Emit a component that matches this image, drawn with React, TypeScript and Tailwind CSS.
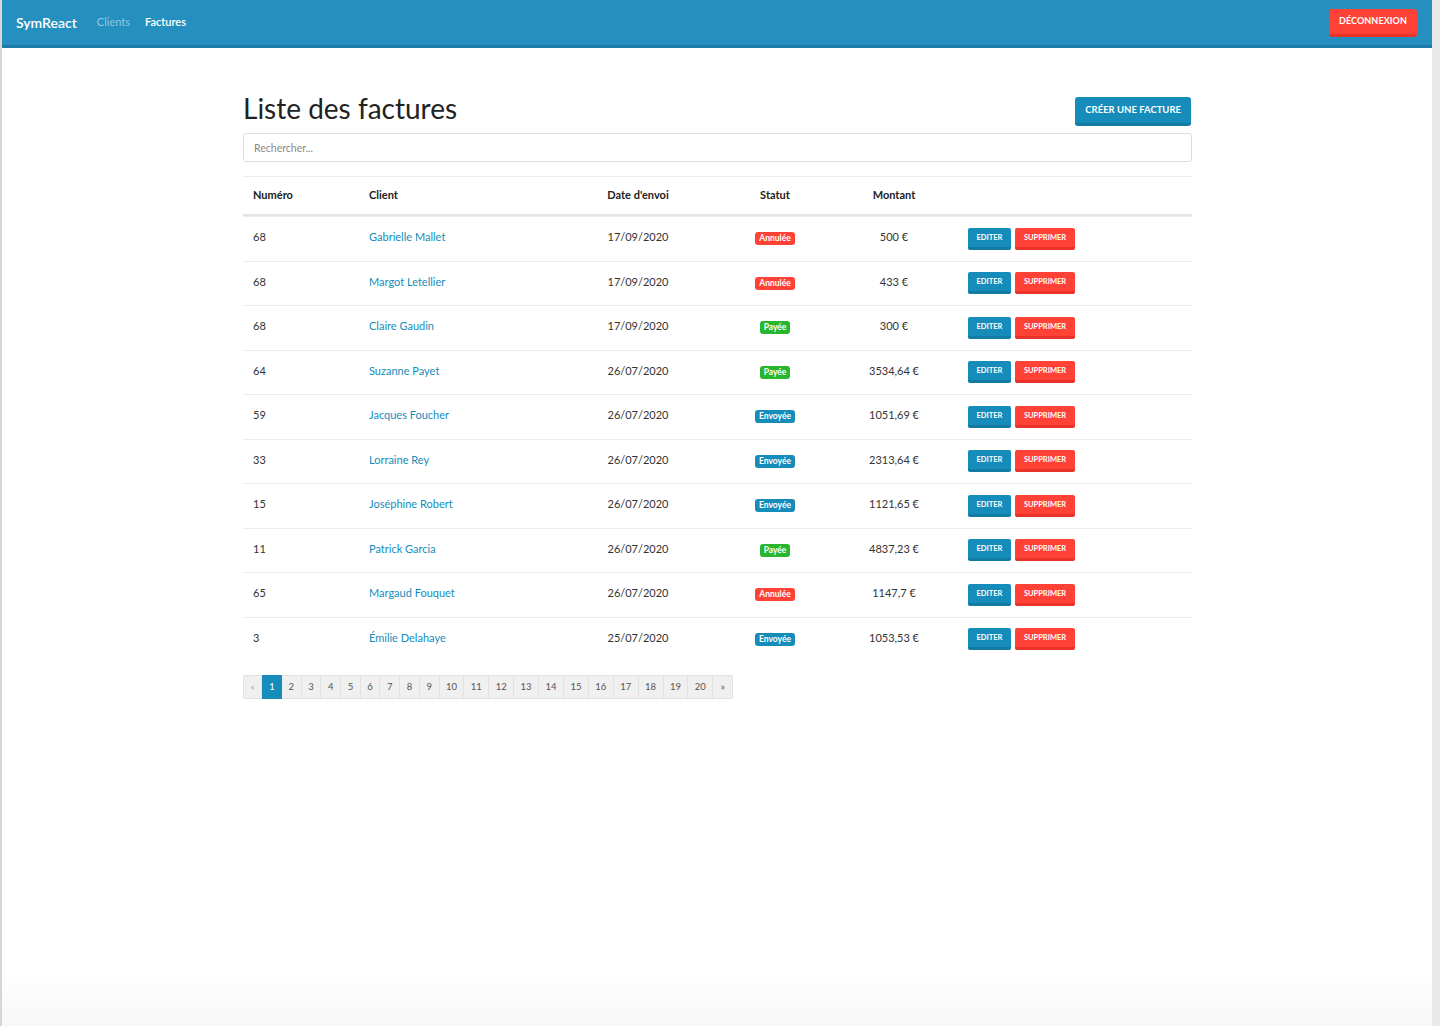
import React from 'react';

type Statut = 'PAID' | 'SENT' | 'CANCELLED';

interface Invoice {
  chrono: number;
  client: string;
  sentAt: string;
  status: Statut;
  amount: string;
}

const INVOICES: Invoice[] = [
  { chrono: 68, client: 'Gabrielle Mallet', sentAt: '17/09/2020', status: 'CANCELLED', amount: '500 €' },
  { chrono: 68, client: 'Margot Letellier', sentAt: '17/09/2020', status: 'CANCELLED', amount: '433 €' },
  { chrono: 68, client: 'Claire Gaudin', sentAt: '17/09/2020', status: 'PAID', amount: '300 €' },
  { chrono: 64, client: 'Suzanne Payet', sentAt: '26/07/2020', status: 'PAID', amount: '3534,64 €' },
  { chrono: 59, client: 'Jacques Foucher', sentAt: '26/07/2020', status: 'SENT', amount: '1051,69 €' },
  { chrono: 33, client: 'Lorraine Rey', sentAt: '26/07/2020', status: 'SENT', amount: '2313,64 €' },
  { chrono: 15, client: 'Joséphine Robert', sentAt: '26/07/2020', status: 'SENT', amount: '1121,65 €' },
  { chrono: 11, client: 'Patrick Garcia', sentAt: '26/07/2020', status: 'PAID', amount: '4837,23 €' },
  { chrono: 65, client: 'Margaud Fouquet', sentAt: '26/07/2020', status: 'CANCELLED', amount: '1147,7 €' },
  { chrono: 3, client: 'Émilie Delahaye', sentAt: '25/07/2020', status: 'SENT', amount: '1053,53 €' }
];

const STATUS_LABELS: Record<Statut, string> = {
  PAID: 'Payée',
  SENT: 'Envoyée',
  CANCELLED: 'Annulée'
};

const STATUS_CLASSES: Record<Statut, string> = {
  PAID: 'bg-[#28b62c]',
  SENT: 'bg-[#158cba]',
  CANCELLED: 'bg-[#ff4136]'
};

const PAGES = Array.from({ length: 20 }, (_, i) => i + 1);

const COLS = 'grid grid-cols-[116px_216px_126px_148px_90px_1fr] items-center';

function Navbar() {
  return (
    <nav className="h-[48px] bg-[#2590c0] border-b-[3px] border-[#1d7aa6] flex items-center pl-[14px] pr-[15px]">
      <span className="text-white text-[14px] font-semibold mr-[20px]">SymReact</span>
      <a className="text-[11px] text-[#8ec8e2] mr-[15px]">Clients</a>
      <a className="text-[11px] text-white font-semibold">Factures</a>
      <button className="ml-auto h-[28px] px-[10px] bg-[#ff4136] border-b-[3px] border-[#e8322a] rounded-[3px] text-white text-[9px] font-bold uppercase tracking-[0.1px]">
        Déconnexion
      </button>
    </nav>
  );
}

function InvoiceRow({ invoice }: { invoice: Invoice }) {
  return (
    <div className={`${COLS} h-[44.5px] pb-[3px] border-t border-[#ececec] text-[11px] text-[#333]`}>
      <div className="pl-[10px]">{invoice.chrono}</div>
      <div className="pl-[10px]">
        <a className="text-[#158cba]">{invoice.client}</a>
      </div>
      <div className="text-center">{invoice.sentAt}</div>
      <div className="text-center">
        <span className={`${STATUS_CLASSES[invoice.status]} inline-block px-[4px] leading-[13px] rounded-[3px] text-white text-[8.5px] font-bold`}>
          {STATUS_LABELS[invoice.status]}
        </span>
      </div>
      <div className="text-center">{invoice.amount}</div>
      <div className="flex gap-[4px] pl-[29px] pt-[3px]">
        <button className="h-[22px] w-[43px] bg-[#158cba] border-b-[3px] border-[#127ba3] rounded-[2px] text-white text-[7.5px] font-bold uppercase">
          Editer
        </button>
        <button className="h-[22px] w-[60px] bg-[#ff4136] border-b-[3px] border-[#e8322a] rounded-[2px] text-white text-[7.5px] font-bold uppercase">
          Supprimer
        </button>
      </div>
    </div>
  );
}

function Pagination() {
  return (
    <ul className="flex mt-[14px] h-[24px] text-[9.5px] text-[#555]">
      <li className="w-[19px] flex items-center justify-center bg-[#f0f0f0] border border-[#e2e2e2] rounded-l-[2px] text-[#aaa]">«</li>
      {PAGES.map(page => (
        <li
          key={page}
          className={
            page === 1
              ? 'w-[20px] flex items-center justify-center bg-[#158cba] border border-[#158cba] text-white'
              : page < 10
              ? 'w-[19.7px] flex items-center justify-center bg-[#f0f0f0] border border-l-0 border-[#e2e2e2]'
              : 'w-[24.9px] flex items-center justify-center bg-[#f0f0f0] border border-l-0 border-[#e2e2e2]'
          }
        >
          {page}
        </li>
      ))}
      <li className="w-[20px] flex items-center justify-center bg-[#f0f0f0] border border-l-0 border-[#e2e2e2] rounded-r-[2px]">»</li>
    </ul>
  );
}

export default function App() {
  return (
    <div className="h-[1026px] flex bg-[#e9e9e9] font-['Lato','Liberation_Sans',sans-serif]">
      <div className="w-[2px] bg-[#d6d6d6]" />
      <div className="flex-1 flex flex-col bg-gradient-to-b from-white from-95% to-[#f7f7f7]">
        <Navbar />
        <main className="w-[949px] ml-[241px] pt-[49px]">
          <div className="flex items-start justify-between">
            <h1 className="text-[28px] leading-[28px] text-[#222] mt-[-3px]">Liste des factures</h1>
            <button className="h-[29px] px-[10px] mr-[1px] bg-[#158cba] border-b-[3px] border-[#127ba3] rounded-[3px] text-white text-[9.5px] font-bold uppercase">
              Créer une facture
            </button>
          </div>
          <input
            className="mt-[7px] w-full h-[29px] px-[10px] border border-[#dedede] rounded-[3px] text-[10.5px] placeholder:text-[#888] outline-none"
            placeholder="Rechercher..."
          />
          <div className="mt-[14px] border-t border-[#ececec]">
            <div className={`${COLS} h-[39px] border-b-2 border-[#e2e6ea] text-[11px] font-bold text-[#222]`}>
              <div className="pl-[10px]">Numéro</div>
              <div className="pl-[10px]">Client</div>
              <div className="text-center">Date d'envoi</div>
              <div className="text-center">Statut</div>
              <div className="text-center">Montant</div>
              <div />
            </div>
            {INVOICES.map((invoice, i) => (
              <InvoiceRow key={i} invoice={invoice} />
            ))}
          </div>
          <Pagination />
        </main>
      </div>
      <div className="w-[8px] bg-[#e9e9e9]" />
    </div>
  );
}
